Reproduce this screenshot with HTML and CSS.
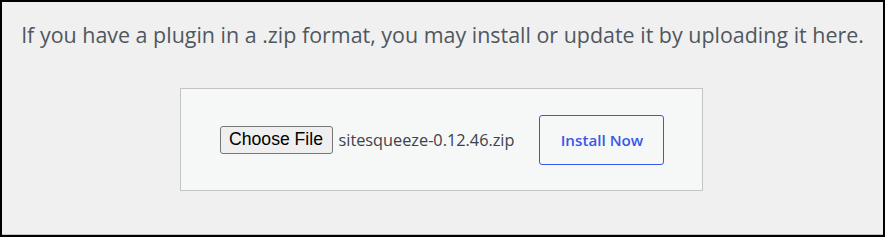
FILE: index.html
```html
<!DOCTYPE html>
<html lang="en">
<head>
<meta charset="utf-8">
<title>Upload Plugin</title>
<link rel="stylesheet" href="styles.css">
</head>
<body>
<div class="frame">
  <div class="page">
    <p class="install-help">If you have a plugin in a .zip format, you may install or update it by uploading it here.</p>
    <form class="upload-box">
      <div class="file-field">
        <button type="button" class="choose-file">Choose File</button>
        <span class="file-name">sitesqueeze-0.12.46.zip</span>
      </div>
      <button type="button" class="install-now">Install Now</button>
    </form>
  </div>
</div>
</body>
</html>
```

FILE: styles.css
```css
html, body {
  margin: 0;
  padding: 0;
  background: #000;
}

.frame {
  width: 885px;
  height: 237px;
  box-sizing: border-box;
  border: 2px solid #000;
  background: #f0f0f1;
}

.page {
  height: 100%;
  box-sizing: border-box;
  border-bottom: 1px solid #c3c4c7;
  display: flex;
  flex-direction: column;
  align-items: center;
}

.install-help {
  margin: 0;
  padding-top: 18px;
  height: 86px;
  box-sizing: border-box;
  font-family: "Open Sans", "Noto Sans", sans-serif;
  font-size: 21.45px;
  line-height: 29px;
  color: #50575e;
  text-align: center;
  white-space: nowrap;
}

.upload-box {
  margin: 0 0 0 -2px;
  width: 523px;
  height: 103px;
  box-sizing: border-box;
  border: 1px solid #c3c4c7;
  background: #f6f7f7;
  display: flex;
  align-items: center;
  justify-content: center;
  gap: 25px;
  padding-left: 1px;
}

.file-field {
  display: flex;
  align-items: center;
  gap: 6px;
}

.choose-file {
  width: 113px;
  height: 28px;
  padding: 0;
  border: 1px solid #767676;
  border-radius: 3px;
  background: #efefef;
  color: #000;
  font-family: "Liberation Sans", Arial, sans-serif;
  font-size: 17.6px;
}

.file-name {
  font-family: "Open Sans", "Noto Sans", sans-serif;
  font-size: 16.3px;
  color: #3c434a;
}

.install-now {
  width: 125px;
  height: 50px;
  padding: 0;
  border: 1px solid #3858e9;
  border-radius: 3px;
  background: transparent;
  color: #3858e9;
  font-family: "Open Sans", "Noto Sans", sans-serif;
  font-size: 15.2px;
  font-weight: 600;
}
```
